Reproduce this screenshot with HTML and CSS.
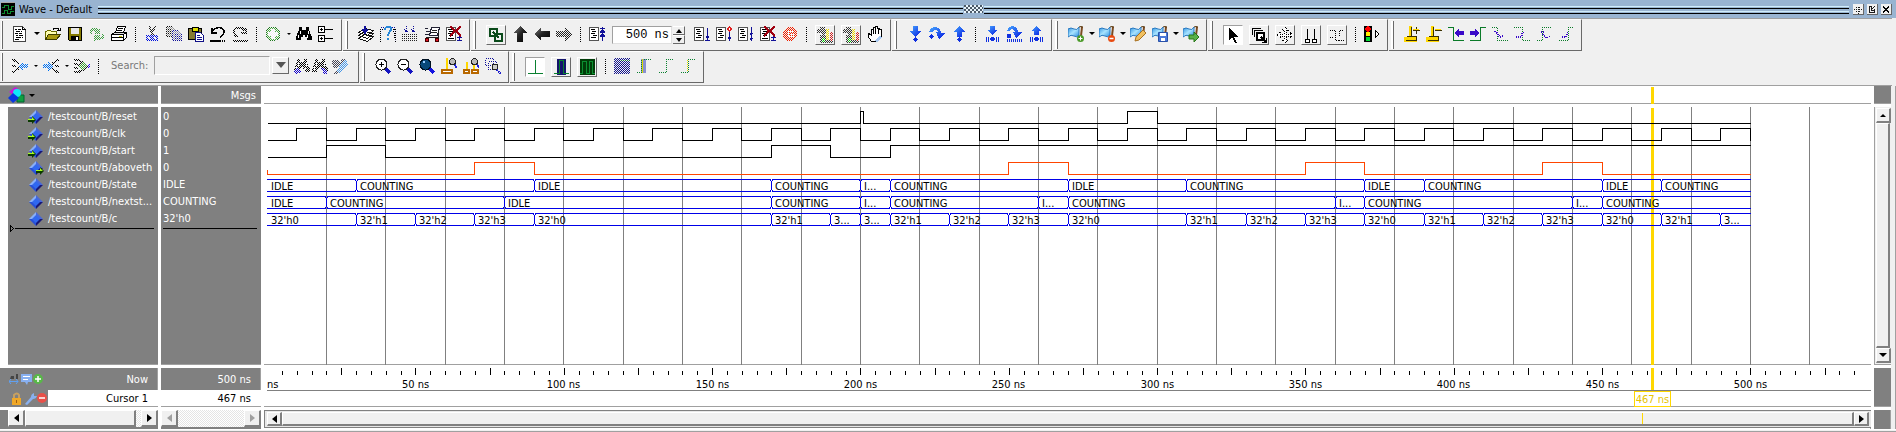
FILE: index.html
```html
<!DOCTYPE html>
<html lang="en">
<head>
<meta charset="utf-8">
<title>Wave - Default</title>
<link rel="stylesheet" href="styles.css">
</head>
<body>
<svg class="defs" aria-hidden="true">
  <defs>
    <linearGradient id="g-blue" x1="0" y1="0" x2="1" y2="1"><stop offset="0" stop-color="#48a8ff"/><stop offset="1" stop-color="#0418e0"/></linearGradient>
    <linearGradient id="g-dark" x1="0" y1="0" x2="1" y2="1"><stop offset="0" stop-color="#888"/><stop offset=".5" stop-color="#222"/><stop offset="1" stop-color="#000"/></linearGradient>
    <linearGradient id="g-flag" x1="0" y1="0" x2="1" y2="1"><stop offset="0" stop-color="#2a8de0"/><stop offset=".5" stop-color="#a8e4ff"/><stop offset="1" stop-color="#2a8de0"/></linearGradient>
  </defs>
  <symbol id="new" viewBox="0 0 16 16"><path d="M1.5.5h9l3 3v12h-12z" fill="#fff" stroke="#444"/><path d="M10.5.5v3h3M3 3.500h2m1 0h3M4 5.500h4m1 0h1M3 7.500h3m1 0h3M4 9.500h2m1 0h4M4 11.500h5m1 0h1M3 13.500h4" stroke="#000" fill="none"/></symbol>
  <symbol id="open" viewBox="0 0 16 16"><path d="M.5 13.500v-8h1l1-1h3l1 1h5v3" fill="#ffffb0" stroke="#6b6b00"/><path d="M.5 13.500l3-5h12l-4 5z" fill="#a89a10" stroke="#3d3d00"/><path d="M8 3.500l2-1.500h3l1.500 2.500M12 4.500h3v-3" stroke="#000" fill="none"/></symbol>
  <symbol id="save" viewBox="0 0 16 16"><path d="M1.500 1.500h13v13h-12l-1-1z" fill="#857a00" stroke="#000"/><path d="M4 2h8v6H4z" fill="#e8e8e8"/><path d="M4 10h8v5H4z" fill="#000"/><path d="M9 11h2v3H9z" fill="#fff"/></symbol>
  <symbol id="refresh" viewBox="0 0 16 16"><path d="M0 7c2-6 7-6 9-4l2-2v7H5l2-2C5 4 3 5 3 8zM16 9c-2 6-7 6-9 4l-2 2V9h6l-2 2c2 1 4 0 4-3z" fill="#3e9e42"/></symbol>
  <symbol id="print" viewBox="0 0 16 16"><path d="M4.500 6.500l2-6h8l-2 6z" fill="#fff" stroke="#000"/><path d="M7 2.500h5M6 4.500h5" stroke="#000"/><path d="M.5 8.500l3-2h11l-2 2z" fill="#ddd" stroke="#000"/><path d="M.5 8.500h12l3-2v5l-3 3h-12z" fill="#fff" stroke="#000"/><path d="M1 11.500h12M2 14.500h10M12.500 8.500v6" stroke="#000" stroke-width="1.500"/><path d="M8 10h3v1H8z" fill="#cc0"/></symbol>
  <symbol id="cut" viewBox="0 0 16 16"><path d="M5 0l4 9M11 0L7 9" stroke="#222" stroke-width="2"/><circle cx="5" cy="12" r="2.500" fill="none" stroke="#0010e0" stroke-width="2"/><circle cx="11" cy="12" r="2.500" fill="none" stroke="#0010e0" stroke-width="2"/></symbol>
  <symbol id="copy" viewBox="0 0 16 16"><path d="M.5.5h6l3 3v7h-9zM2 3h4M2 5h5M2 7h5" fill="#999" stroke="#111"/><path d="M6.500 4.500h6l3 3v7h-9zM8 8h5M8 10h6M8 12h6" fill="#88a" stroke="#101098"/></symbol>
  <symbol id="paste" viewBox="0 0 16 16"><path d="M.5 2.500h13v11H.5z" fill="#857a30" stroke="#000"/><path d="M4 1h6v4H4z" fill="#dd0" stroke="#000"/><path d="M7.500 6.500h5l3 3v6h-8z" fill="#fff" stroke="#101088"/><path d="M9 9.500h3M9 11.500h5M9 13.500h5" stroke="#101088"/></symbol>
  <symbol id="undo" viewBox="0 0 16 16"><path d="M3 5c3-5 11-4 11 1 0 3-2 4-4 5M2 2v5h5" fill="none" stroke="#000" stroke-width="1.500"/><path d="M0 14.500h11m1 0h1m1 0h1" stroke="#000" stroke-width="2"/></symbol>
  <symbol id="redo" viewBox="0 0 16 16"><path d="M13 5C10 0 2 1 2 6c0 3 2 4 4 5M14 2v5H9" fill="none" stroke="#000" stroke-width="2"/><path d="M1 14.500h15" stroke="#000" stroke-width="2"/></symbol>
  <symbol id="plus" viewBox="0 0 16 16"><circle cx="8" cy="8" r="7" fill="#4cb040" stroke="#1e7a1e"/><path d="M6 3h4v3h3v4h-3v3H6v-3H3V6h3z" fill="#fff"/></symbol>
  <symbol id="find" viewBox="0 0 16 16"><path d="M3 1h3v3h4V1h3v3l3 7v3h-5v-3H9v-2H7v2H5v3H0v-3l3-7z" fill="#000"/><path d="M2.500 9v3M4.500 5v3M12.500 5v3M11.500 9v3" stroke="#fff"/></symbol>
  <symbol id="tree" viewBox="0 0 16 16"><path d="M.5.5h6v6h-6zM.5 9.500h6v6h-6zM7 3.500h8M7 12.500h8M2 3.500h3M3.500 2v3M2 12.500h3M3.500 11v3" fill="#fff" stroke="#000"/></symbol>
  <symbol id="layers" viewBox="0 0 16 16"><path d="M.5 12.500l6-4 9 2-6 5zM.5 9.500l6-4 9 2-6 5zM.5 6.500l6-4 9 2-6 5z" fill="#fff" stroke="#111"/><path d="M7 0v5M5 4l2 3 2-3z" stroke="#101098" stroke-width="1.500" fill="#101098"/></symbol>
  <symbol id="query" viewBox="0 0 16 16"><path d="M.5 15.500V3h2m11 0h2v12.500z" fill="#eef" stroke="#000" stroke-dasharray="1 1"/><path d="M1 1.500h3m8 0h3" stroke="#101098" stroke-dasharray="1 1"/><path d="M5 4c0-5 7-4 6 0-1 2-3 3-3 6M8 12v2" stroke="#2a88d8" stroke-width="2" fill="none"/></symbol>
  <symbol id="chip" viewBox="0 0 16 16"><path d="M4.500 0v5M11.500 0v5M2 3l2.500 3L7 3M9 3l2.500 3L14 3" stroke="#101098" stroke-dasharray="1 1" fill="none"/><path d="M0 8.500h16M0 10.500h16M0 12.500h16M0 14.500h16" stroke="#222" stroke-dasharray="1 1"/></symbol>
  <symbol id="cart" viewBox="0 0 16 16"><path d="M1 2.500h3M2 5.500h4M1 8.500h4" stroke="#223"/><path d="M5.500 9.500l2-8h8l-2 8z" fill="#fff" stroke="#223"/><path d="M8 4.500h5M7 6.500h6M2 11.500h12l1-6" stroke="#222" fill="none"/><circle cx="3" cy="14" r="2" fill="#e01020" stroke="#400"/><circle cx="13" cy="14" r="2" fill="#e01020" stroke="#400"/></symbol>
  <symbol id="docx" viewBox="0 0 16 16"><path d="M.5 1.500h9v13h-9z" fill="#fff" stroke="#555"/><path d="M2 3.500h4M3 5.500h5M2 7.500h5M3 9.500h4M2 12.500h6" stroke="#000"/><path d="M13.500 7v7M11 11.500h5M11 14.500h5" stroke="#101098"/><path d="M4 0l11 10M15 0L4 10" stroke="#a00010" stroke-width="2"/></symbol>
  <symbol id="link" viewBox="0 0 16 16"><path d="M2 2h7v7H2zM7 7h7v7H7z" fill="none" stroke="#0a4a1a" stroke-width="2"/><path d="M5 5l6 6" stroke="#0a4a1a" stroke-width="2"/></symbol>
  <symbol id="up" viewBox="0 0 16 16"><path d="M8 0l7 7h-4v9H5V7H1z" fill="url(#g-dark)"/></symbol>
  <symbol id="left" viewBox="0 0 16 16"><path d="M0 8l7-7v4h9v6H7v4z" fill="url(#g-dark)"/></symbol>
  <symbol id="right" viewBox="0 0 16 16"><path d="M16 8L9 1v4H0v6h9v4z" fill="#222"/></symbol>
  <symbol id="docup" viewBox="0 0 16 16"><path d="M.5 1.500h9v13h-9z" fill="#fff" stroke="#555"/><path d="M2 3.500h4M3 5.500h4M2 7.500h4M4 9.500h4M2 11.500h5" stroke="#000"/><path d="M13.500 1v14M11 2.500h5M11.500 6l2-3 2 3zM11.500 10l2-3 2 3z" stroke="#101098" fill="#101098"/></symbol>
  <symbol id="doc1" viewBox="0 0 16 16"><path d="M.5 1.500h9v13h-9z" fill="#fff" stroke="#555"/><path d="M2 3.500h4M3 5.500h4M2 7.500h4M4 9.500h4M2 11.500h5" stroke="#000"/><path d="M13.500 2v11M11 14.500h5M12 10l1.500 3 1.500-3z" stroke="#101098" fill="#101098"/></symbol>
  <symbol id="doc2" viewBox="0 0 16 16"><path d="M.5 1.500h9v13h-9z" fill="#fff" stroke="#555"/><path d="M2 3.500h4M3 5.500h4M2 7.500h4M4 9.500h4M2 11.500h5" stroke="#000"/><path d="M13.500 6v9M12 11l1.500 3 1.500-3z" stroke="#101098" fill="#101098"/><path d="M13.500 1l2 2-2 2-2-2z" fill="#fff" stroke="#e02020"/></symbol>
  <symbol id="doc3" viewBox="0 0 16 16"><path d="M.5 1.500h9v13h-9z" fill="#fff" stroke="#555"/><path d="M2 3.500h4M3 5.500h4M2 7.500h4M4 9.500h4M2 11.500h5" stroke="#000"/><path d="M13.500 1v14M12 7l1.500 2 1.500-2zM12 12l1.500 2 1.500-2z" stroke="#101098" fill="#101098"/></symbol>
  <symbol id="stop" viewBox="0 0 16 16"><circle cx="8" cy="8" r="7" fill="#f02000"/><path d="M12 5.500H6.500v5H12M8 8.500h4" stroke="#fff" fill="none"/></symbol>
  <symbol id="mix" viewBox="0 0 16 16"><path d="M0 2h3V0h5v2h3v4H8v3H5V6H0zM3 8h7v8H3zM10 12h6v4h-6z" fill="#333"/><path d="M5 11h3v4H5z" fill="#0c0"/><path d="M9 2h3v11H9z" fill="#e8d800"/><path d="M13 5h3v9h-3z" fill="#d02020"/></symbol>
  <symbol id="hand" viewBox="0 0 16 16"><path d="M4 15L1 10V7l3 2V3h2V1h2V0h2v2h2v1h2v8l-3 4z" fill="#fff" stroke="#000"/><path d="M6.500 2v6M8.500 1v7M11.500 3v5" stroke="#000"/><path d="M7 15l5-5 3 1-5 5z" fill="#a8c8f0"/></symbol>
  <symbol id="into" viewBox="0 0 16 16"><path d="M6 0h5v5h3l-5.500 6L3 5h3z" fill="url(#g-blue)"/><circle cx="8.500" cy="13.500" r="2.200" fill="#1030e0"/></symbol>
  <symbol id="over" viewBox="0 0 16 16"><path d="M0 6c2-7 12-6 12 1h4l-6 6-3-7h2C8 3 5 3 4 6z" fill="url(#g-blue)"/><circle cx="2.500" cy="10.500" r="2.200" fill="#1030e0"/></symbol>
  <symbol id="out" viewBox="0 0 16 16"><path d="M8.500 0L14 6h-3v5H6V6H3z" fill="url(#g-blue)"/><circle cx="8.500" cy="13.500" r="2.200" fill="#1030e0"/></symbol>
  <symbol id="into2" viewBox="0 0 16 16"><path d="M6 0h5v4h3L8.500 9 3 4h3z" fill="url(#g-blue)"/><circle cx="8.500" cy="13" r="2.200" fill="#1030e0"/><path d="M2.500 11v5M4.500 11v5M12.500 11v5M14.500 11v5" stroke="#1030e0"/></symbol>
  <symbol id="over2" viewBox="0 0 16 16"><path d="M1 5c2-7 11-6 11 1h4l-6 6-3-6h2C8 3 5 2 4 5z" fill="url(#g-blue)"/><circle cx="3" cy="10" r="2.200" fill="#1030e0"/><path d="M1 14.500h15" stroke="#1030e0" stroke-width="3" stroke-dasharray="1 1"/></symbol>
  <symbol id="out2" viewBox="0 0 16 16"><path d="M8.500 0L14 5h-3v4H6V5H3z" fill="url(#g-blue)"/><circle cx="8.500" cy="13" r="2.200" fill="#1030e0"/><path d="M2.500 11v5M4.500 11v5M12.500 11v5M14.500 11v5" stroke="#1030e0"/></symbol>
  <symbol id="flag" viewBox="0 0 16 16"><path d="M0 3q3-2 6 0t5-2v8q-2 3-5 1T0 11z" fill="url(#g-flag)" stroke="#2878c0"/><path d="M14 1l-1 9" stroke="#7a4a20" stroke-width="2"/><path d="M11 1q2-1 4 0" stroke="#5a3a10" fill="none"/></symbol>
  <symbol id="flagadd" viewBox="0 0 16 16"><use href="#flag"/><circle cx="12.500" cy="12.500" r="3.500" fill="#4a9a28"/><path d="M10.500 12.500h4M12.500 10.500v4" stroke="#fff"/></symbol>
  <symbol id="flagdel" viewBox="0 0 16 16"><use href="#flag"/><circle cx="12.500" cy="12.500" r="3.500" fill="#e84a10"/><path d="M10.500 12.500h4" stroke="#fff" stroke-width="1.500"/></symbol>
  <symbol id="flagedit" viewBox="0 0 16 16"><use href="#flag"/><path d="M5 15l1-4 7-7 3 3-7 7z" fill="#f0c060" stroke="#a87020"/></symbol>
  <symbol id="flagsave" viewBox="0 0 16 16"><use href="#flag"/><path d="M6.500 6.500h9v9h-9z" fill="#4a78d8" stroke="#2850a8"/><path d="M8 7h6v3H8zM9 12h4v3H9z" fill="#fff"/></symbol>
  <symbol id="flaggo" viewBox="0 0 16 16"><use href="#flag"/><path d="M6 9h5V6l5 5-5 5v-3H6z" fill="#58b048" stroke="#287818"/></symbol>
  <symbol id="arrow" viewBox="0 0 16 16"><path d="M4 1v12l3-3 3 6h2l-3-6h4z" fill="#000"/></symbol>
  <symbol id="zoomsel" viewBox="0 0 16 16"><path d="M1.500 8V1.500H10M3.500 10V3.500H12" fill="none" stroke="#000"/><path d="M6 6h7v7H6z" fill="#fff" stroke="#000" stroke-width="2"/><path d="M10 10l5 5M15.500 11v4.500H11" stroke="#000" fill="none" stroke-width="1.500"/></symbol>
  <symbol id="pan" viewBox="0 0 16 16"><path d="M8 0l3 3H9v4h4V5l3 3-3 3V9H9v4h2l-3 3-3-3h2V9H3v2L0 8l3-3v2h4V3H5z" fill="#fff" stroke="#000" stroke-dasharray="1 1"/></symbol>
  <symbol id="twocur" viewBox="0 0 16 16"><path d="M4.500 2v10M11.500 2v10M2.500 12.500h4v3h-4zM9.500 12.500h4v3h-4z" fill="#fff" stroke="#000"/></symbol>
  <symbol id="edit" viewBox="0 0 16 16"><path d="M1 3.500h5.500v10H10M10.500 3.500V10M10 13.500h5.500M1 10.500h4M11 3.500h3" fill="none" stroke="#000" stroke-dasharray="1 1"/></symbol>
  <symbol id="light" viewBox="0 0 16 16"><path d="M0 0h8v16H0z"/><circle cx="4" cy="3" r="2.800" fill="red"/><circle cx="4" cy="8" r="2.200" fill="#fe0"/><circle cx="4" cy="13" r="2.200" fill="#0d3"/><path d="M11 4.500l4 3.500-4 4z" fill="#fff" stroke="#000"/></symbol>
  <symbol id="curadd" viewBox="0 0 16 16"><path d="M6.500 0v10M1 12h10v3H1z" stroke="#ffd700" stroke-width="3" fill="#ffd700"/><path d="M7.500 1v10M2 14.500h11M3 10.500h9v3M9 4.500h7M12.500 1v7" stroke="#3a3000" fill="none"/><path d="M9 3.500h6" stroke="#ffd700"/></symbol>
  <symbol id="curdel" viewBox="0 0 16 16"><path d="M6.500 0v10M1 12h10v3H1z" stroke="#ffd700" stroke-width="3" fill="#ffd700"/><path d="M7.500 1v10M2 14.500h11M3 10.500h9v3M9 4.500h7" stroke="#3a3000" fill="none"/><path d="M9 3.500h6" stroke="#ffd700"/></symbol>
  <symbol id="prev" viewBox="0 0 16 16"><path d="M0 1.500h5.500v13H16" fill="none" stroke="#0a7a28"/><path d="M6 7l5-4v2h5v4h-5v2z" fill="#3a08c8"/></symbol>
  <symbol id="next" viewBox="0 0 16 16"><path d="M0 14.500h10.500v-13H16" fill="none" stroke="#0a7a28"/><path d="M10 7L5 3v2H0v4h5v2z" fill="#3a08c8"/></symbol>
  <symbol id="fall1" viewBox="0 0 16 16"><path d="M0 1.500h5.500v13H16" fill="none" stroke="#0a7a28" stroke-dasharray="1 1"/><path d="M3 5l5 6 4-1" stroke="#3a08c8" stroke-dasharray="1 1" stroke-width="2" fill="none"/></symbol>
  <symbol id="fall2" viewBox="0 0 16 16"><path d="M0 1.500h8.500v13H16" fill="none" stroke="#0a7a28" stroke-dasharray="1 1"/><path d="M2 11h5l2-5" stroke="#3a08c8" stroke-dasharray="1 1" stroke-width="2" fill="none"/></symbol>
  <symbol id="rise1" viewBox="0 0 16 16"><path d="M1 14.500h5.500v-13H16" fill="none" stroke="#0a7a28" stroke-dasharray="1 1"/><path d="M5 6h4M7 8l3 4 4-2" stroke="#3a08c8" stroke-dasharray="1 1" stroke-width="2" fill="none"/></symbol>
  <symbol id="rise2" viewBox="0 0 16 16"><path d="M1 14.500h9.500v-13H16" fill="none" stroke="#0a7a28" stroke-dasharray="1 1"/><path d="M4 11h4l2-5" stroke="#3a08c8" stroke-dasharray="1 1" stroke-width="2" fill="none"/></symbol>
  <symbol id="merge1" viewBox="0 0 16 16"><path d="M0 2h2l5 4M0 8h4M0 14h2l5-4" stroke="#000" stroke-width="2" fill="none"/><path d="M6 8l5-5v3h5v4h-5v3z" fill="#0070f0"/></symbol>
  <symbol id="merge2" viewBox="0 0 16 16"><path d="M16 2h-2L9 6M16 8h-4M16 14h-2l-5-4" stroke="#000" stroke-width="2" fill="none"/><path d="M10 8L5 3v3H0v4h5v3z" fill="#0070f0"/></symbol>
  <symbol id="merge3" viewBox="0 0 16 16"><path d="M0 2h5l4 3M0 6h4M0 10h4M0 14h5l4-3" stroke="#000" stroke-width="2" fill="none"/><path d="M4 8l5-5 5 5-5 5z" fill="#3aa030" stroke="#111"/><path d="M14 6h2v4h-2z" fill="#20f"/></symbol>
  <symbol id="find1" viewBox="0 0 16 16"><use href="#find"/><path d="M0 13l4-4 3 5-5 2z" fill="#10c"/></symbol>
  <symbol id="find2" viewBox="0 0 16 16"><use href="#find"/><path d="M9 10l5 1 2 5h-4z" fill="#10c"/></symbol>
  <symbol id="wrench" viewBox="0 0 16 16"><path d="M0 2h6l3 4-3 4H2L0 6zM9 1h4v4L5 16H2l7-10z" fill="#445"/><path d="M4 13l6-8 4-3 2 4-8 9z" fill="#4898e8"/></symbol>
  <symbol id="zin" viewBox="0 0 16 16"><path d="M10 10l5 5" stroke="#1414c0" stroke-width="3"/><circle cx="6.500" cy="6.500" r="5.500" fill="#fff" stroke="#222"/><path d="M4 6.500h5M6.500 4v5" stroke="#000" stroke-width="1.500"/></symbol>
  <symbol id="zout" viewBox="0 0 16 16"><path d="M10 10l5 5" stroke="#1414c0" stroke-width="3"/><circle cx="6.500" cy="6.500" r="5.500" fill="#fff" stroke="#222"/><path d="M4 6.500h5" stroke="#000" stroke-width="1.500"/></symbol>
  <symbol id="zfull" viewBox="0 0 16 16"><path d="M10 10l5 5" stroke="#1414e0" stroke-width="3"/><circle cx="6.500" cy="6.500" r="5.500" fill="#084878" stroke="#012"/><path d="M4 3h2v2H4z" fill="#9cf"/></symbol>
  <symbol id="zcur" viewBox="0 0 16 16"><path d="M5.500 0v11" stroke="#ffd700" stroke-width="2"/><path d="M1 12h10v3H1z" fill="#fff" stroke="#b86800" stroke-width="1.500"/><path d="M13 6l3 4" stroke="#22d" stroke-width="2"/><circle cx="11.500" cy="3.500" r="3" fill="#bbb" stroke="#222"/></symbol>
  <symbol id="zcur2" viewBox="0 0 16 16"><path d="M3.500 4v8M11 2v10" stroke="#ffd700" stroke-width="2"/><path d="M1 12h5v3H1zM9 12h6v3H9z" fill="#fff" stroke="#b86800" stroke-width="1.500"/><path d="M14 6l2 4" stroke="#22d" stroke-width="2"/><circle cx="11.500" cy="3.500" r="3" fill="#bbb" stroke="#222"/></symbol>
  <symbol id="zlast" viewBox="0 0 16 16"><path d="M.5.500h8v7h-8zM3.500 3.500h8v8h-8z" fill="none" stroke="#101098" stroke-dasharray="1 1"/><circle cx="10" cy="9" r="3" fill="#ccc" stroke="#222"/><path d="M12 12l4 4" stroke="#22c" stroke-width="2" stroke-dasharray="1 1"/></symbol>
  <symbol id="w1" viewBox="0 0 16 16"><path d="M1 14.500h15M8.500 1v13" stroke="#0a8030"/></symbol>
  <symbol id="w2" viewBox="0 0 16 16"><path d="M4 0h9v16H4z" fill="#14146c"/><path d="M1 14.500h5.500v-13h4v13H16" stroke="#0a8030" fill="none"/></symbol>
  <symbol id="w3" viewBox="0 0 16 16"><path d="M1 0h15v16H1z" fill="#003c08"/><path d="M1 14.500h2.500v-12h4v12h3v-12h3v12H16" stroke="#0a9030" fill="none"/></symbol>
  <symbol id="w4" viewBox="0 0 16 16"><path d="M0 0h16v16H0z" fill="#14148c"/><path d="M7 2h9" stroke="#0a8030"/></symbol>
  <symbol id="w5" viewBox="0 0 16 16"><path d="M5 1h5v14H5z" fill="#8890d0"/><path d="M1 14.500h4.500v-13H15" stroke="#0a8030" stroke-dasharray="1 1" fill="none"/><path d="M6.500 1v14" stroke="#dd0"/></symbol>
  <symbol id="w6" viewBox="0 0 16 16"><path d="M1 14.500h7.500v-13H15" stroke="#0a8030" stroke-dasharray="1 1" fill="none"/></symbol>
  <symbol id="w7" viewBox="0 0 16 16"><path d="M1 14.500h7.500v-13H15" stroke="#0a8030" stroke-dasharray="1 1" fill="none"/><path d="M7.500 2v12" stroke="#dd0" stroke-dasharray="1 1"/></symbol>
  <symbol id="sig" viewBox="0 0 16 16"><path d="M8 1l7 7H8z" fill="#4868d8"/><path d="M8 1L1 8h7z" fill="#88aef8"/><path d="M1 8l7 7V8z" fill="#2850d8"/><path d="M15 8l-7 7V8z" fill="#181878"/><path d="M8 4l4 4-4 4-4-4z" fill="#3068f0"/></symbol>
  <symbol id="sigin" viewBox="0 0 16 16"><use href="#sig"/><path d="M0 10h4V7l4 4-4 4v-2H0z" fill="#0a3a00"/><path d="M0 10h4V8l3 3H0z" fill="#a8ff20"/></symbol>
  <symbol id="sigout" viewBox="0 0 16 16"><use href="#sig"/><path d="M8 10h4V7l4 4-4 4v-2H8z" fill="#0a3a00"/><path d="M8 10h4V8l3 3H8z" fill="#a8ff20"/></symbol>
</svg>

<header class="title">
  <svg class="app" viewBox="0 0 14 14"><path d="M0 0h14v14H0z" fill="#000"/><path d="M1 5h3V3h4v4h3V4h2M1 11h3V8h3v3h3V9h3" stroke="#0a8a30" fill="none"/><path d="M0 .500h14" stroke="#aaa"/></svg>
  <h1>Wave - Default</h1>
  <div class="rails"></div><div class="grip"></div><div class="rails"></div>
  <div class="winbtns">
    <button aria-label="Add pane"><svg viewBox="0 0 9 9"><path d="M4.500 0v9M0 4.500h9M2 2.500h5M2 6.500h5" stroke="#000" stroke-dasharray="1 1"/></svg></button>
    <button aria-label="Undock"><svg viewBox="0 0 9 9"><path d="M5 1.500H1.500v6h6V4M8 0L4 4M3.500 2v3.500H7" stroke="#000" fill="none"/></svg></button>
    <button aria-label="Close"><svg viewBox="0 0 9 9"><path d="M1 1l7 7M8 1L1 8" stroke="#000" stroke-width="2"/></svg></button>
  </div>
</header>

<nav class="bars">
  <div class="row">
    <div class="group">
      <button aria-label="New"><svg><use href="#new"/></svg></button><button class="caret wide" aria-label="New options"></button>
      <button aria-label="Open"><svg><use href="#open"/></svg></button>
      <button aria-label="Save"><svg><use href="#save"/></svg></button>
      <button class="off" aria-label="Reload"><svg><use href="#refresh"/></svg></button>
      <button aria-label="Print"><svg><use href="#print"/></svg></button>
      <i class="sep"></i>
      <button class="off" aria-label="Cut"><svg><use href="#cut"/></svg></button>
      <button class="off" aria-label="Copy"><svg><use href="#copy"/></svg></button>
      <button aria-label="Paste"><svg><use href="#paste"/></svg></button>
      <button aria-label="Undo"><svg><use href="#undo"/></svg></button>
      <button class="off" aria-label="Redo"><svg><use href="#redo"/></svg></button>
      <i class="sep"></i>
      <button class="off" aria-label="Add"><svg><use href="#plus"/></svg></button><button class="caret small" aria-label="Add options"></button>
      <button aria-label="Find"><svg><use href="#find"/></svg></button>
      <button aria-label="Expand"><svg><use href="#tree"/></svg></button>
    </div>
    <div class="group">
      <button aria-label="Compile"><svg><use href="#layers"/></svg></button>
      <button aria-label="Compile out of date"><svg><use href="#query"/></svg></button>
      <button aria-label="Compile all"><svg><use href="#chip"/></svg></button>
      <button aria-label="Simulate"><svg><use href="#cart"/></svg></button>
      <button aria-label="Break"><svg><use href="#docx"/></svg></button>
    </div>
    <div class="group">
      <button class="raised" aria-label="Environment"><svg><use href="#link"/></svg></button>
      <button aria-label="Up"><svg><use href="#up"/></svg></button>
      <button aria-label="Back"><svg><use href="#left"/></svg></button>
      <button class="off" aria-label="Forward"><svg><use href="#right"/></svg></button>
      <i class="sep"></i>
      <button aria-label="Restart"><svg><use href="#docup"/></svg></button>
      <input class="runlen" aria-label="Run length" value="500 ns">
      <span class="spin"><button aria-label="Increase"></button><button class="down" aria-label="Decrease"></button></span>
      <button aria-label="Run"><svg><use href="#doc1"/></svg></button>
      <button aria-label="Continue run"><svg><use href="#doc2"/></svg></button>
      <button aria-label="Run all"><svg><use href="#doc3"/></svg></button>
      <button aria-label="Break run"><svg><use href="#docx"/></svg></button>
      <button class="off" aria-label="Stop"><svg><use href="#stop"/></svg></button>
      <i class="sep"></i>
      <button class="raised off" aria-label="Performance profiling"><svg><use href="#mix"/></svg></button>
      <button class="raised off" aria-label="Memory profiling"><svg><use href="#mix"/></svg></button>
      <button aria-label="Edit breakpoints"><svg><use href="#hand"/></svg></button>
    </div>
    <div class="group">
      <button aria-label="Step into"><svg><use href="#into"/></svg></button>
      <button aria-label="Step over"><svg><use href="#over"/></svg></button>
      <button aria-label="Step out"><svg><use href="#out"/></svg></button>
      <i class="sep"></i>
      <button aria-label="Step into instance"><svg><use href="#into2"/></svg></button>
      <button aria-label="Step over instance"><svg><use href="#over2"/></svg></button>
      <button aria-label="Step out instance"><svg><use href="#out2"/></svg></button>
    </div>
    <div class="group smooth">
      <button aria-label="Add bookmark"><svg><use href="#flagadd"/></svg></button><button class="caret" aria-label="Add bookmark options"></button>
      <button aria-label="Delete bookmark"><svg><use href="#flagdel"/></svg></button><button class="caret" aria-label="Delete bookmark options"></button>
      <button aria-label="Edit bookmark"><svg><use href="#flagedit"/></svg></button>
      <button aria-label="Save bookmark"><svg><use href="#flagsave"/></svg></button><button class="caret" aria-label="Save bookmark options"></button>
      <button aria-label="Go to bookmark"><svg><use href="#flaggo"/></svg></button>
    </div>
    <div class="group">
      <button class="raised on" aria-label="Select mode"><svg><use href="#arrow"/></svg></button>
      <button class="raised" aria-label="Zoom mode"><svg><use href="#zoomsel"/></svg></button>
      <button class="raised" aria-label="Pan mode"><svg><use href="#pan"/></svg></button>
      <button class="raised" aria-label="Two cursor mode"><svg><use href="#twocur"/></svg></button>
      <button class="raised" aria-label="Edit mode"><svg><use href="#edit"/></svg></button>
      <i class="sep"></i>
      <button aria-label="Stop drawing"><svg><use href="#light"/></svg></button>
    </div>
    <div class="group">
      <button aria-label="Insert cursor"><svg><use href="#curadd"/></svg></button>
      <button aria-label="Delete cursor"><svg><use href="#curdel"/></svg></button>
      <button aria-label="Previous transition"><svg><use href="#prev"/></svg></button>
      <button aria-label="Next transition"><svg><use href="#next"/></svg></button>
      <button aria-label="Previous falling edge"><svg><use href="#fall1"/></svg></button>
      <button aria-label="Next falling edge"><svg><use href="#fall2"/></svg></button>
      <button aria-label="Previous rising edge"><svg><use href="#rise1"/></svg></button>
      <button aria-label="Next rising edge"><svg><use href="#rise2"/></svg></button>
    </div>
  </div>
  <div class="row">
    <div class="group lookup">
      <button class="off" aria-label="Previous in group"><svg><use href="#merge1"/></svg></button><button class="caret small" aria-label="Options"></button>
      <button class="off" aria-label="Next in group"><svg><use href="#merge2"/></svg></button><button class="caret small" aria-label="Options"></button>
      <button class="off" aria-label="Show drivers"><svg><use href="#merge3"/></svg></button>
      <i class="sep"></i>
      <label for="search">Search:</label>
      <input id="search" class="search"><button class="drop" aria-label="Search history"></button>
      <button class="near off" aria-label="Search backward"><svg><use href="#find1"/></svg></button>
      <button class="near off" aria-label="Search forward"><svg><use href="#find2"/></svg></button>
      <button class="off" aria-label="Search options"><svg><use href="#wrench"/></svg></button>
    </div>
    <div class="group">
      <button aria-label="Zoom in"><svg><use href="#zin"/></svg></button>
      <button aria-label="Zoom out"><svg><use href="#zout"/></svg></button>
      <button aria-label="Zoom full"><svg><use href="#zfull"/></svg></button>
      <button aria-label="Zoom on cursor"><svg><use href="#zcur"/></svg></button>
      <button aria-label="Zoom between cursors"><svg><use href="#zcur2"/></svg></button>
      <button aria-label="Zoom last"><svg><use href="#zlast"/></svg></button>
    </div>
    <div class="group">
      <button class="raised on" aria-label="Thin wave"><svg><use href="#w1"/></svg></button>
      <button class="raised" aria-label="Medium wave"><svg><use href="#w2"/></svg></button>
      <button class="raised" aria-label="Wide wave"><svg><use href="#w3"/></svg></button>
      <i class="sep"></i>
      <button class="off" aria-label="Fill"><svg><use href="#w4"/></svg></button>
      <button aria-label="Edge blue"><svg><use href="#w5"/></svg></button>
      <button aria-label="Edge green"><svg><use href="#w6"/></svg></button>
      <button aria-label="Edge yellow"><svg><use href="#w7"/></svg></button>
    </div>
  </div>
</nav>

<main class="panes">
  <section class="pane names">
    <div class="head">
      <svg class="shapes" viewBox="0 0 17 17"><path d="M1 5l6-5 5 3-6 5z" fill="#c818d8"/><path d="M9 8h7v7H9z" fill="#10a040" stroke="#063"/><circle cx="9" cy="6" r="4" fill="#10e8f8"/><path d="M5 6l6 5-6 5-5-5z" fill="#0838e0"/></svg>
      <button class="caret" aria-label="Signal options"></button>
    </div>
    <div class="body">
      <ul class="signals">
        <li><svg><use href="#sigin"/></svg>/testcount/B/reset</li>
        <li><svg><use href="#sigin"/></svg>/testcount/B/clk</li>
        <li><svg><use href="#sigin"/></svg>/testcount/B/start</li>
        <li><svg><use href="#sigout"/></svg>/testcount/B/aboveth</li>
        <li><svg><use href="#sig"/></svg>/testcount/B/state</li>
        <li><svg><use href="#sig"/></svg>/testcount/B/nextst...</li>
        <li><svg><use href="#sig"/></svg>/testcount/B/c</li>
      </ul>
      <div class="insert"><svg viewBox="0 0 5 7"><path d="M.5.500l3 3-3 3z" fill="#808080" stroke="#000"/></svg></div>
    </div>
    <div class="now">
      <svg viewBox="0 0 36 14"><path d="M2 4h3v3h2V2h2v5H1z" fill="#444"/><path d="M0 9.500h9M2 7L0 9.500 2 12M7 7l2 2.500L7 12" stroke="#60a0f0" fill="none"/><path d="M12 2h11v8h-4l-1 3-2-3h-4z" fill="#88b0f0"/><path d="M14 4.500h7M14 7.500h5" stroke="#fff"/><circle cx="29" cy="7" r="5" fill="#58b848"/><path d="M26 7h6M29 4v6" stroke="#fff" stroke-width="1.500"/></svg>
      <span>Now</span>
    </div>
    <div class="cur">
      <div class="tools"><svg viewBox="0 0 38 14"><path d="M3 6V3q3-3 5 0v3" stroke="#c8a060" stroke-width="2" fill="none"/><path d="M1 6h9v7H1z" fill="#f0a828"/><path d="M5 8h1v3H5z" fill="#a06010"/><path d="M14 12l6-7q0-3 3-4v3h3q-1 3-4 3l-6 6z" fill="#88b0f0"/><circle cx="31" cy="6" r="5" fill="#e85048"/><path d="M28 6h6" stroke="#fff" stroke-width="1.500"/></svg></div>
      <span>Cursor 1</span>
    </div>
    <div class="scroll"><button aria-label="Scroll left"></button><div class="thumb"></div><i class="rest"></i><button class="fwd" aria-label="Scroll right"></button></div>
  </section>

  <section class="pane msgs">
    <div class="head">Msgs</div>
    <div class="body">
      <ul class="signals"><li>0</li><li>0</li><li>1</li><li>0</li><li>IDLE</li><li>COUNTING</li><li>32'h0</li></ul>
      <div class="insert"></div>
    </div>
    <div class="now"><span>500 ns</span></div>
    <div class="cur"><span>467 ns</span></div>
    <div class="scroll"><button disabled aria-label="Scroll left"></button><i class="rest all"></i><button disabled class="fwd" aria-label="Scroll right"></button></div>
  </section>

  <section class="pane wave">
    <div class="head"><svg id="top"></svg></div>
    <div class="body"><svg id="plot"></svg></div>
    <div class="time"><svg id="ruler"></svg></div>
    <div class="scroll"><button aria-label="Scroll left"></button><div class="thumb"><i class="mark"></i></div><button class="fwd" aria-label="Scroll right"></button></div>
  </section>

  <section class="pane side">
    <div class="head"></div>
    <div class="body"><div class="vscroll"><button aria-label="Scroll up"></button><div class="thumb"></div><button class="down" aria-label="Scroll down"></button></div></div>
    <div class="time"></div>
    <div class="corner"></div>
  </section>
</main>
<footer class="foot"></footer>
<script src="app.js"></script>
</body>
</html>
```
FILE: styles.css
```css
* { box-sizing: border-box; }
body {
  margin: 0;
  min-height: 100vh;
  display: flex;
  flex-direction: column;
  background: #f0f0f0;
  color: #000;
  font: 11px/17px "DejaVu Sans Condensed", "Noto Sans", sans-serif;
  overflow: hidden;
}
button, input { font: inherit; margin: 0; padding: 0; border: 0; border-radius: 0; background: none; }
ul { list-style: none; margin: 0; padding: 0; }
.defs { position: absolute; width: 0; height: 0; }

/* title bar */
.title { display: flex; align-items: center; height: 18px; background: #99b4d1; padding-right: 4px; }
.title h1 { margin: 0 6px 0 4px; font-size: 11px; font-weight: normal; white-space: nowrap; }
.app { width: 15px; height: 14px; }
.rails {
  flex: 1;
  height: 8px;
  margin-top: 1px;
  background: linear-gradient(#d0ecf8 0 1px, transparent 1px 2px, #000 2px 3px, transparent 3px 5px, #d0ecf8 5px 6px, transparent 6px 7px, #000 7px 8px);
}
.grip {
  width: 19px;
  height: 8px;
  margin: 0 1px;
  background: repeating-conic-gradient(#e8f4fc 0 25%, #4c5a68 0 50%) 0 0 / 4px 4px;
}
.winbtns { display: flex; gap: 3px; margin-left: 4px; }
.winbtns button { width: 11px; height: 11px; background: #f0f0f0; border-right: 1px solid #666; border-bottom: 1px solid #666; display: flex; }
.winbtns svg { width: 9px; height: 9px; margin: 1px; }

/* toolbars */
.bars { border-top: 1px solid #a0a0a0; border-bottom: 1px solid #a0a0a0; padding-bottom: 2px; background: #f0f0f0; margin-right: 4px; }
.row { display: flex; gap: 1px; }
.group {
  display: flex;
  align-items: center;
  height: 32px;
  padding: 0 4px 0 12px;
  border-top: 1px solid #fff;
  border-right: 1px solid #696969;
  border-bottom: 1px solid #696969;
  background: linear-gradient(#696969, #696969) 4px 1px / 1px 28px no-repeat, linear-gradient(#fff, #fff) 2px 1px / 2px 28px no-repeat;
}
.group:first-child { padding-left: 9px; background-position: 2px 1px, 1px 1px; }
.group button { width: 22px; height: 20px; display: flex; align-items: center; justify-content: center; padding-bottom: 3px; flex: none; }
.group svg { width: 16px; height: 16px; overflow: visible; }
svg { shape-rendering: crispEdges; }
.smooth svg { shape-rendering: auto; }
.off svg { mask: repeating-conic-gradient(#000 0 25%, transparent 0 50%) 0 0 / 2px 2px; }
.group .raised {
  width: 20px;
  margin: 0 3px;
  padding: 0;
  border: 1px solid #fff;
  border-right-color: #696969;
  border-bottom-color: #696969;
}
.group .on { background: #fff; border-color: #a0a0a0 #fff #fff #a0a0a0; }
.caret { width: 9px; height: 20px; display: flex; align-items: center; justify-content: center; }
.group .caret { width: 9px; }
.group .wide { width: 11px; }
.caret::before { content: ""; border: 3px solid transparent; border-top-color: #000; border-bottom: 0; }
.small::before { border-width: 2px; border-bottom: 0; }
.sep { width: 11px; height: 15px; margin-bottom: 2px; background: repeating-linear-gradient(#000 0 1px, transparent 1px 2px) 5px 0 / 1px 100% no-repeat; }
.group .runlen {
  width: 60px; height: 18px; margin-left: 4px; padding-right: 2px;
  font: 12px "Liberation Mono", monospace; text-align: right;
  background: #fff; border: 1px solid #a0a0a0; border-right-color: #e0e0e0; border-bottom-color: #e0e0e0;
}
.spin { display: flex; flex-direction: column; width: 12px; margin: 0 6px 0 1px; }
.group .spin button { width: 12px; height: 9px; padding: 0; border-right: 1px solid #696969; border-bottom: 1px solid #696969; border-top: 1px solid #fff; }
.spin button::before { content: ""; border: 3px solid transparent; border-bottom: 4px solid #000; border-top: 0; }
.spin .down::before { border-top: 4px solid #000; border-bottom: 0; }
.group label { margin: 0 5px 4px 7px; width: 38px; color: #787878; white-space: nowrap; }
.group.lookup { padding-right: 7px; }
.search { width: 116px; height: 19px; margin-bottom: 3px; border: 1px solid #a0a0a0; border-right-color: #fff; border-bottom-color: #fff; background: #f0f0f0; }
.group .drop { width: 17px; height: 17px; margin: 0 4px 4px 2px; padding: 0; border: 1px solid #fff; border-right-color: #696969; border-bottom-color: #696969; }
.drop::before { content: ""; border: 5px solid transparent; border-top: 6px solid #555; border-bottom: 0; }
.group .near { width: 18px; }

/* panes */
.panes {
  flex: 1;
  display: grid;
  grid-template-columns: 161px 103px 1fr 19px;
  padding-right: 2px;
  border-right: 1px solid #a0a0a0;
}
.pane {
  display: grid;
  grid-template-rows: 21px 1fr 22px 20px 19px;
  min-width: 0;
  background: #808080;
  color: #fff;
  border-right: 3px solid #fff;
  box-shadow: inset -1px 0 #a0a0a0;
}
.head, .body, .cur, .time { border-bottom: 3px solid #fff; background: #808080; box-shadow: 0 -1px #a0a0a0 inset; min-height: 0; min-width: 0; }
.names .head { display: flex; align-items: center; padding-left: 8px; }
.shapes { width: 17px; height: 17px; margin-right: 2px; shape-rendering: auto; }
.names .body { border-left: 8px solid #fff; padding-top: 1px; }
.msgs .body { padding-top: 1px; }
.signals li { display: flex; align-items: center; height: 17px; white-space: nowrap; }
.names li { padding-left: 20px; gap: 4px; }
.msgs li { padding-left: 2px; }
.signals svg { width: 16px; height: 16px; flex: none; shape-rendering: auto; }
.names .insert { display: flex; align-items: center; height: 7px; margin: -2px 4px 0 2px; }
.insert svg { width: 5px; height: 7px; }
.names .insert::after { content: ""; flex: 1; height: 1px; background: #000; }
.msgs .insert { height: 1px; margin: 1px 4px 0 2px; background: #000; }
.msgs .head { text-align: right; padding-right: 5px; line-height: 19px; }
.now { display: flex; align-items: center; justify-content: space-between; padding: 0 10px 0 9px; }
.now svg { width: 36px; height: 14px; shape-rendering: auto; }
.cur { display: flex; align-items: center; justify-content: space-between; background: #fff; color: #000; padding-right: 10px; }
.tools { align-self: stretch; width: 48px; padding: 2px 0 0 11px; background: #808080; }
.tools svg { width: 38px; height: 14px; display: block; shape-rendering: auto; }
.msgs .now, .msgs .cur { justify-content: flex-end; }

/* scroll bars */
.scroll { display: flex; padding: 0 0 2px; border-bottom: 0; background: #808080; }
.names .scroll { padding-left: 8px; }
.scroll button, .thumb, .vscroll button {
  background: #f0f0f0;
  border: 1px solid #fff;
  border-right: 2px solid #808080;
  border-bottom: 2px solid #808080;
}
.scroll button, .vscroll button { width: 17px; flex: none; display: flex; align-items: center; justify-content: center; }
.scroll button::before { content: ""; border: 4px solid transparent; border-right: 5px solid #000; border-left: 0; }
.scroll .fwd::before { border-left: 5px solid #000; border-right: 0; }
.scroll button:disabled::before { border-right-color: #a0a0a0; border-left-color: #a0a0a0; }
.thumb { flex: 1; }
.rest { width: 5px; background: repeating-conic-gradient(#fff 0 25%, #e4e4e4 0 50%) 0 0 / 2px 2px; }
.all { flex: 1; }
.wave { background: #fff; grid-template-rows: 21px 1fr 42px 19px; }
.wave .head, .wave .body, .wave .time { background: #fff; padding-left: 3px; overflow: hidden; }
.wave svg { display: block; width: 100%; height: 100%; }
.wave .body { contain: size; }
.wave .scroll { border: 1px solid #808080; border-width: 1px 0 1px 1px; background: #e8e8e8; padding: 1px 2px; margin-bottom: 1px; }
.wave .scroll button { width: 15px; }
.mark { display: block; height: 100%; width: 1px; margin-left: calc(100% - 210px); background: #ffd700; }
.side { grid-template-rows: 21px 1fr 42px 19px; border-right: 2px solid #f0f0f0; }
.side .body { background: #f0f0f0; }
.vscroll { display: flex; flex-direction: column; height: 100%; padding: 1px 1px 2px; border-left: 1px solid #a0a0a0; }
.vscroll button { width: 15px; height: 15px; }
.vscroll button::before { content: ""; border: 3px solid transparent; border-bottom: 3px solid #000; border-top: 0; }
.vscroll .down::before { border: 4px solid transparent; border-top: 4px solid #000; border-bottom: 0; }
.foot { height: 3px; border-top: 1px solid #fff; border-bottom: 1px solid #a0a0a0; background: #f0f0f0; }

/* waveforms */
.grid { stroke: #808080; }
.bit { fill: none; stroke: #000; }
.warn { stroke: #ff4500; }
.bus { fill: none; stroke: #0000e8; }
.cursor { stroke: #ffd700; stroke-width: 3; }
.flag { fill: #fff; stroke: #ffd700; }
.val { fill: #000; }
.flagtext { fill: #e8c400; }
.mid { text-anchor: middle; }
```
FILE: app.js
```js
const NS = 'http://www.w3.org/2000/svg';
const SCALE = 445 / 150;
const END = 500;
const CURSOR = 467;
const px = t => Math.floor(t * SCALE + 0.1) + 0.5;
const tick = t => Math.round(t * SCALE) + 0.5;

function add(svg, tag, attrs, text) {
  const el = document.createElementNS(NS, tag);
  for (const k in attrs) el.setAttribute(k, attrs[k]);
  if (text) el.textContent = text;
  svg.appendChild(el);
}

const clk = [];
for (let t = 10; t <= END; t += 10) clk.push(t);

const bits = [
  { edges: [200, 201, 290, 300] },
  { edges: clk },
  { edges: [20, 40, 170, 190, 210] },
  { edges: [70, 90, 250, 270, 350, 370, 430, 450], cls: 'bit warn', lead: true }
];

const I = 'IDLE', C = 'COUNTING', S = 'I...';
const buses = [
  [[0, I], [30, C], [90, I], [170, C], [200, S], [210, C], [270, I], [310, C], [370, I], [390, C], [450, I], [470, C]],
  [[0, I], [20, C], [80, I], [170, C], [200, S], [210, C], [260, S], [270, C], [360, S], [370, C], [440, S], [450, C]],
  [[0, "32'h0"], [30, "32'h1"], [50, "32'h2"], [70, "32'h3"], [90, "32'h0"], [170, "32'h1"], [190, '3...'], [200, '3...'],
   [210, "32'h1"], [230, "32'h2"], [250, "32'h3"], [270, "32'h0"], [310, "32'h1"], [330, "32'h2"], [350, "32'h3"],
   [370, "32'h0"], [390, "32'h1"], [410, "32'h2"], [430, "32'h3"], [450, "32'h0"], [470, "32'h1"], [490, '3...']]
];

const plot = document.getElementById('plot');
const ruler = document.getElementById('ruler');
const topBar = document.getElementById('top');

for (let t = 20; t <= 520; t += 20) add(plot, 'line', { x1: px(t), x2: px(t), y1: 0, y2: '100%', class: 'grid' });
add(plot, 'line', { x1: px(CURSOR), x2: px(CURSOR), y1: 1, y2: '100%', class: 'cursor' });
add(topBar, 'line', { x1: px(CURSOR), x2: px(CURSOR), y1: 1, y2: '100%', class: 'cursor' });

bits.forEach((sig, row) => {
  const hi = 4.5 + row * 17, lo = hi + 12;
  let level = false;
  let d = sig.lead ? `M0.5 ${lo - 5}V${lo}` : `M0.5 ${lo}`;
  sig.edges.forEach(t => { d += `H${px(t)}`; level = !level; d += `V${level ? hi : lo}`; });
  if (sig.edges[sig.edges.length - 1] < END) d += `H${px(END)}`;
  add(plot, 'path', { d, class: sig.cls || 'bit' });
});

buses.forEach((segs, row) => {
  const hi = 72.5 + row * 17, lo = hi + 12;
  segs.forEach(([t, label], i) => {
    const a = px(t), last = i === segs.length - 1, b = px(last ? END : segs[i + 1][0]);
    const start = i ? `M${b - (last ? 0 : 1)} ${hi}H${a + 1}L${a} ${hi + 3}V${lo - 3}L${a + 1} ${lo}H${b - (last ? 0 : 1)}`
                    : `M0 ${hi}H${b - 1}M0 ${lo}H${b - 1}`;
    const end = last ? '' : `M${b - 1} ${hi}L${b} ${hi + 3}M${b} ${lo - 3}L${b - 1} ${lo}`;
    add(plot, 'path', { d: start + end, class: 'bus' });
    add(plot, 'text', { x: Math.floor(a) + 4, y: Math.floor(lo) - 1, class: 'val' }, label);
  });
});

for (let t = 5; t < 540; t += 5) {
  add(ruler, 'line', { x1: tick(t), x2: tick(t), y1: t % 25 ? 3 : 0, y2: 7, stroke: '#000' });
}
add(ruler, 'text', { x: 0, y: 20, class: 'val' }, 'ns');
for (let t = 50; t <= END; t += 50) add(ruler, 'text', { x: px(t), y: 20, class: 'val mid' }, `${t} ns`);
add(ruler, 'line', { x1: 0, x2: '100%', y1: 22.5, y2: 22.5, class: 'grid' });
add(ruler, 'line', { x1: px(CURSOR), x2: px(CURSOR), y1: 0, y2: 22, class: 'cursor' });
add(ruler, 'rect', { x: px(CURSOR) - 18, y: 23.5, width: 36, height: 15, class: 'flag' });
add(ruler, 'text', { x: px(CURSOR), y: 35, class: 'flagtext mid' }, '467 ns');
```
